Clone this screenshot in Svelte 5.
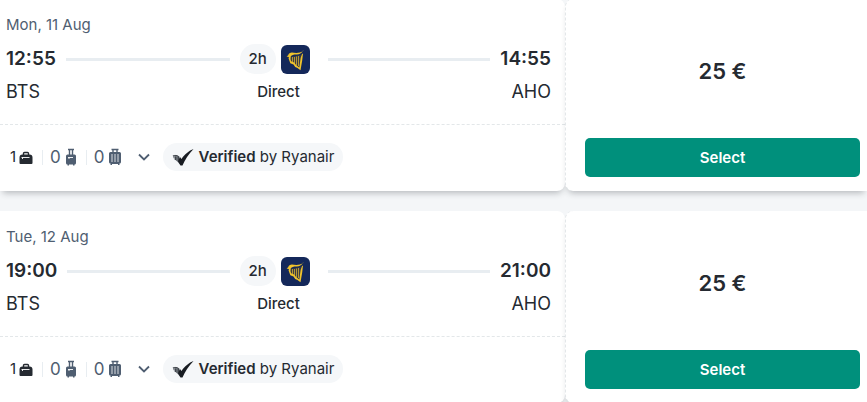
<script lang="ts">
  type Flight = {
    date: string
    depart: string
    arrive: string
    from: string
    to: string
    duration: string
    price: string
  }

  const flights: Flight[] = [
    { date: 'Mon, 11 Aug', depart: '12:55', arrive: '14:55', from: 'BTS', to: 'AHO', duration: '2h', price: '25 €' },
    { date: 'Tue, 12 Aug', depart: '19:00', arrive: '21:00', from: 'BTS', to: 'AHO', duration: '2h', price: '25 €' },
  ]
</script>

<main class="results">
  {#each flights as flight}
    <article class="card">
      <section class="trip">
        <div class="route">
          <div class="date">{flight.date}</div>
          <div class="times">
            <div class="side">
              <strong class="time">{flight.depart}</strong>
              <span class="line"></span>
            </div>
            <div class="middle">
              <span class="duration">{flight.duration}</span>
              <svg class="carrier" viewBox="0 0 29 29" role="img" aria-label="Ryanair">
                <rect width="29" height="29" rx="6" fill="#14285a" />
                <!-- harp: soundboard and strings, then the gold frame -->
                <path d="M9 12l11-2-2 12-4-3-4-2z" fill="#3b3d40" />
                <path d="M11.500 12v6M13.500 12v7M15.500 11.500v9M17.500 11v10" stroke="#d6ae31" stroke-width=".8" />
                <path d="M21.800 5.800c-1.300 2.600-3.300 3.800-6.300 3.700-2.500-.1-4.500.4-5.800 2L9.500 14l.6 2.300 3 1.200 2 2.500 3.200 2.500 1.300-9.500L21 9l1-.5-.8 7-1.700 9.800-3-2.300-2.300-1-1.700-2.500-3.200-1.300-.8-2.200-.9-2.500.3-1.500-2.300-.5 1.600-1.200c.5-1.800 1.800-2.800 3.800-2.800 2.400.4 6.800 1.500 11.800-1.700z" fill="#f0c32c" />
              </svg>
            </div>
            <div class="side">
              <span class="line"></span>
              <strong class="time">{flight.arrive}</strong>
            </div>
          </div>
          <div class="places">
            <span>{flight.from}</span>
            <span class="stops">Direct</span>
            <span class="to">{flight.to}</span>
          </div>
        </div>

        <div class="extras">
          <span class="bag small">
            1
            <svg width="14" height="14" viewBox="0 0 14 14" aria-hidden="true">
              <path d="M4.500 5V3.500a1 1 0 0 1 1-1h3a1 1 0 0 1 1 1V5" fill="none" stroke="currentColor" stroke-width="1.400" />
              <path d="M3.500 4.500h7a3 3 0 0 1 3 3V13a1 1 0 0 1-1 1h-11a1 1 0 0 1-1-1V7.500a3 3 0 0 1 3-3z" fill="currentColor" />
              <path d="M2.500 7.500h8M3.500 7.500v1.500" fill="none" stroke="#fff" stroke-width=".9" />
            </svg>
          </span>
          <span class="bag">
            0
            <svg width="14" height="18" viewBox="0 0 14 18" aria-hidden="true">
              <path d="M4 1.500h6M5.500 2v5M8.500 2v5" fill="none" stroke="currentColor" stroke-width="1.400" />
              <path d="M3.500 6.500h7A1.500 1.500 0 0 1 12 8v7a1.500 1.500 0 0 1-1.500 1.500V17.500H9v-1H5v1H3.500v-1A1.500 1.500 0 0 1 2 15V8a1.500 1.500 0 0 1 1.500-1.500z" fill="currentColor" />
              <path d="M4 9.500h5M5 9.500V11" fill="none" stroke="#fff" stroke-width=".9" />
            </svg>
          </span>
          <span class="bag">
            0
            <svg width="14" height="18" viewBox="0 0 14 18" aria-hidden="true">
              <path d="M3.500 1.500h7M5 2v3M9 2v3" fill="none" stroke="currentColor" stroke-width="1.400" />
              <path d="M2.500 4h9A1.500 1.500 0 0 1 13 5.500V14a1.500 1.500 0 0 1-1.500 1.500V17H10v-1H4v1H2.500v-1.500A1.500 1.500 0 0 1 1 14V5.500A1.500 1.500 0 0 1 2.500 4z" fill="currentColor" />
              <path d="M4 6v8M7 6v8M10 6v8" fill="none" stroke="#fff" stroke-width=".8" />
            </svg>
          </span>
          <button class="more" type="button" aria-label="Baggage details">
            <svg width="12" height="8" viewBox="0 0 12 8" aria-hidden="true">
              <path d="M1 1.500l5 5 5-5" fill="none" stroke="currentColor" stroke-width="1.800" />
            </svg>
          </button>
          <span class="verified">
            <svg width="22" height="18" viewBox="0 0 22 18" aria-hidden="true">
              <path d="M21.500 1C17 2.500 12.500 6.500 9.500 11L8 9 5 12.500l3.500 5h2C13 12 16.500 6 21.500 1z" fill="#181c22" />
              <path d="M8 9C6 6.500 3 6.500.5 7.500l1 1.500-.5 1 1.500.5V12l1.700.2 1.300 2z" fill="#858a91" />
              <path d="M1 8c2-1 4-.8 6 1M3.500 8.500v3.500M5 8.500V13M6.500 9v5" fill="none" stroke="#24282e" stroke-width=".7" />
            </svg>
            <span><b>Verified</b> by Ryanair</span>
          </span>
        </div>
      </section>

      <section class="offer">
        <strong class="price">{flight.price}</strong>
        <button class="select" type="button">Select</button>
      </section>
    </article>
  {/each}
</main>

<style>
  :global(body) {
    background: #f4f6f8;
    overflow: hidden;
  }

  .results {
    display: flex;
    flex-direction: column;
    gap: 20px;
    margin-top: -1px;
    color: #252a31;
    font-family: Inter, Roboto, sans-serif;
    font-size: 16px;
    line-height: 20px;
  }

  .card {
    display: grid;
    grid-template-columns: 565fr 302fr;
  }
  .trip, .offer {
    background: #fff;
    border-radius: 0 8px 8px 0;
    box-shadow: 0 5px 6px -3px rgba(37, 42, 49, 0.3);
  }

  .route {
    padding: 16px 14px 22px 6px;
    border-bottom: 1px dashed #e3e7e9;
  }
  .date {
    color: #4f5e71;
    font-size: 15px;
  }
  .times {
    display: grid;
    grid-template-columns: 1fr 78px 1fr;
    align-items: center;
    gap: 10px;
    height: 30px;
    margin-top: 9px;
  }
  .side {
    display: flex;
    align-items: center;
    gap: 10px;
  }
  .time { font-size: 19px; font-weight: 600; }
  .line { flex: 1; height: 3px; background: #e8edf1; }
  .middle {
    display: flex;
    align-items: center;
    gap: 5px;
  }
  .duration {
    padding: 5px 9px;
    border-radius: 15px;
    background: #f5f7f9;
    font-size: 15px;
    font-weight: 500;
  }
  .carrier { width: 29px; height: 29px; }

  .places {
    display: grid;
    grid-template-columns: 1fr 78px 1fr;
    align-items: center;
    margin-top: 8px;
    font-size: 18px;
  }
  .stops { font-size: 15px; font-weight: 500; text-align: center; }
  .to { text-align: right; }

  .extras {
    display: flex;
    align-items: center;
    padding: 18px 7px 20px;
  }
  .bag {
    display: flex;
    align-items: center;
    gap: 3px;
    height: 15px;
    padding: 0 8px 0 7px;
    border-left: 1px solid #e8edf1;
    color: #4f5e71;
    font-size: 17px;
  }
  .bag.small {
    padding: 0 9px 0 3px;
    border-left: 0;
    color: #252a31;
    font-size: 15px;
  }
  .more {
    display: flex;
    padding: 8px;
    border: 0;
    background: none;
    color: #4f5e71;
    cursor: pointer;
  }
  .verified {
    display: flex;
    align-items: center;
    gap: 5px;
    margin-left: 5px;
    padding: 4px 9px;
    border-radius: 15px;
    background: #f5f7f9;
    font-size: 15px;
  }
  .verified b { font-weight: 600; }

  .offer {
    display: flex;
    flex-direction: column;
    justify-content: flex-end;
    gap: 57px;
    padding: 14px 7px 14px 19px;
    border-left: 1px dashed #e3e7e9;
    border-radius: 8px 0 0 8px;
  }
  .price {
    font-size: 22px;
    font-weight: 600;
    text-align: center;
  }
  .select {
    height: 39px;
    border: 0;
    border-radius: 5px;
    background: #00907c;
    color: #fff;
    font: 600 15px Inter, Roboto, sans-serif;
    cursor: pointer;
  }
</style>
